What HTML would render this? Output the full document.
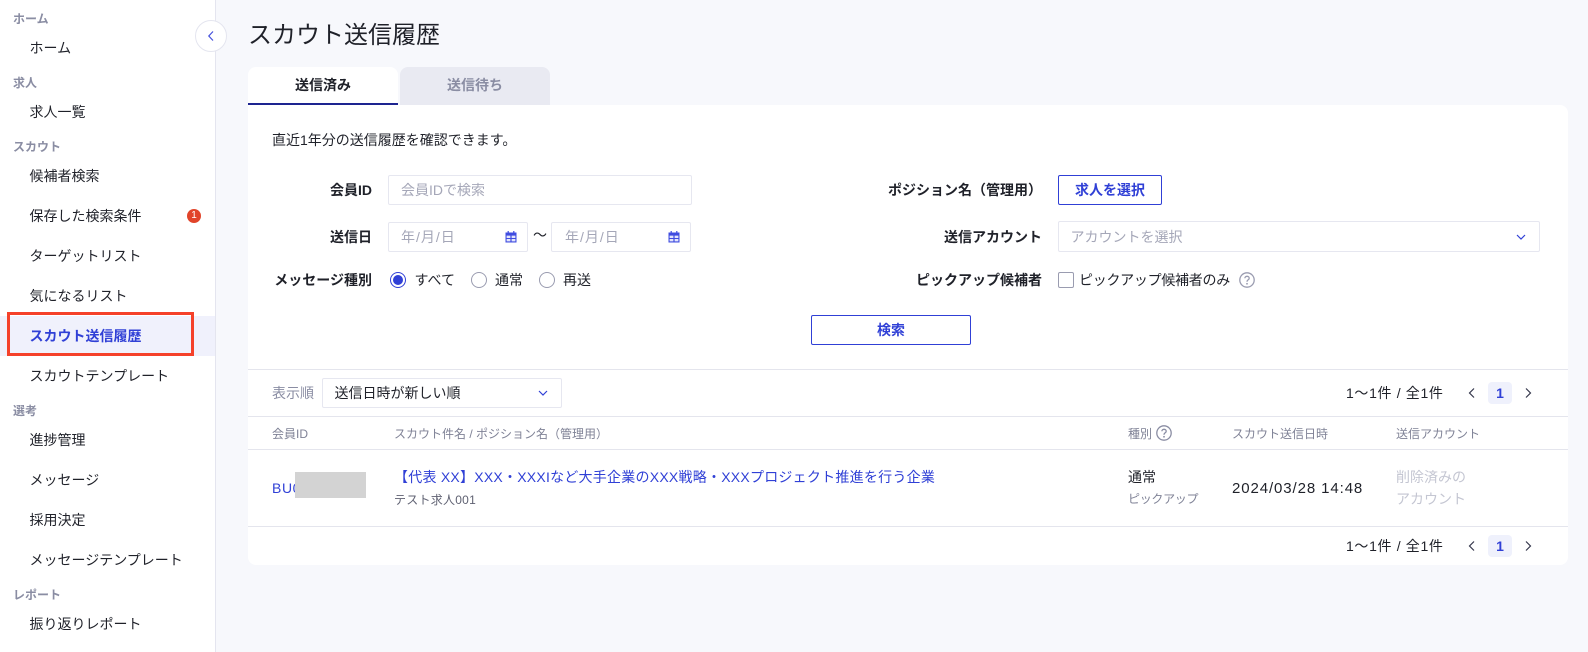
<!DOCTYPE html>
<html lang="ja">
<head>
<meta charset="utf-8">
<title>スカウト送信履歴</title>
<style>
*{box-sizing:border-box}
html,body{margin:0;padding:0}
body{width:1588px;height:652px;position:relative;overflow:hidden;background:#f7f8fc;color:#1f2129;font-family:"Liberation Sans","Noto Sans CJK JP",sans-serif;font-size:14px}
.t{position:absolute;white-space:nowrap;line-height:20px;height:20px}
.a{position:absolute}
.cat{left:13px;font-size:12px;font-weight:700;color:#8a8da3}
.it{left:29.5px;font-size:14px}
.box{position:absolute;background:#fff;border:1px solid #e6e7f0;border-radius:2px}
.ph{color:#a5a7b8}
.btn{position:absolute;background:#fff;border:1px solid #3040d6;border-radius:2px;color:#3040d6;font-weight:700;text-align:center;line-height:28px}
.line{position:absolute;left:248px;width:1320px;height:1px;background:#e4e5ed}
.g{color:#8a8da3}
.th{font-size:12px;color:#7f8296}
.blue{color:#3040d6}
.dis{color:#c4c6d2}
.radio{position:absolute;width:16px;height:16px;border-radius:50%;border:1px solid #9a9cb0;background:#fff}
.pg{letter-spacing:.65px}
svg{position:absolute;display:block}
</style>
</head>
<body>

<!-- Sidebar -->
<div class="a" style="left:0;top:0;width:216px;height:652px;background:#fff;border-right:1px solid #e4e5ef"></div>
<div class="a" style="left:0;top:316px;width:215px;height:40px;background:#f0f1fc"></div>

<div class="t cat" style="top:9px">ホーム</div>
<div class="t it" style="top:38px">ホーム</div>
<div class="t cat" style="top:73px">求人</div>
<div class="t it" style="top:102px">求人一覧</div>
<div class="t cat" style="top:137px">スカウト</div>
<div class="t it" style="top:166px">候補者検索</div>
<div class="t it" style="top:206px">保存した検索条件</div>
<div class="a" style="left:187px;top:209px;width:14px;height:14px;border-radius:50%;background:#e1442a;color:#fff;font-size:10px;line-height:14px;text-align:center">1</div>
<div class="t it" style="top:246px">ターゲットリスト</div>
<div class="t it" style="top:286px">気になるリスト</div>
<div class="t it blue" style="top:326px;font-weight:700">スカウト送信履歴</div>
<div class="a" style="left:7px;top:312px;width:187px;height:44px;border:3px solid #f5412a"></div>
<div class="t it" style="top:366px">スカウトテンプレート</div>
<div class="t cat" style="top:401px">選考</div>
<div class="t it" style="top:430px">進捗管理</div>
<div class="t it" style="top:470px">メッセージ</div>
<div class="t it" style="top:510px">採用決定</div>
<div class="t it" style="top:550px">メッセージテンプレート</div>
<div class="t cat" style="top:585px">レポート</div>
<div class="t it" style="top:614px">振り返りレポート</div>

<div class="a" style="left:195px;top:20px;width:32px;height:32px;border-radius:50%;background:#fff;border:1px solid #e4e5ef"></div>
<svg style="left:205px;top:29px" width="12" height="14" viewBox="0 0 12 14"><path d="M8 2.5 L3.8 7 L8 11.5" fill="none" stroke="#4450dc" stroke-width="1.2"/></svg>

<!-- Title and tabs -->
<div class="t" style="left:248px;top:16px;height:40px;line-height:40px;font-size:24px">スカウト送信履歴</div>
<div class="a" style="left:248px;top:67px;width:150px;height:38px;background:#fff;border-radius:8px 8px 0 0;border-bottom:2px solid #1d2490;text-align:center;font-weight:700;line-height:36px">送信済み</div>
<div class="a" style="left:400px;top:67px;width:150px;height:38px;background:#e9eaf2;border-radius:8px 8px 0 0;text-align:center;font-weight:700;line-height:36px;color:#8a8da3">送信待ち</div>

<!-- Card -->
<div class="a" style="left:248px;top:105px;width:1320px;height:460px;background:#fff;border-radius:0 8px 8px 8px"></div>

<div class="t" style="left:272px;top:130px;font-size:14px">直近1年分の送信履歴を確認できます。</div>

<!-- Form left -->
<div class="t" style="left:172px;width:200px;top:180px;text-align:right;font-weight:700">会員ID</div>
<div class="box" style="left:388px;top:175px;width:304px;height:30px"></div>
<div class="t ph" style="left:401px;top:180px;font-size:14px">会員IDで検索</div>

<div class="t" style="left:172px;width:200px;top:227px;text-align:right;font-weight:700">送信日</div>
<div class="box" style="left:388px;top:222px;width:140px;height:30px"></div>
<div class="t ph" style="left:401px;top:227px;letter-spacing:1px">年/月/日</div>
<svg style="left:505px;top:231px" width="12" height="12" viewBox="0 0 12 12"><path d="M0.5 1.5 H11.5 V11.5 H0.5 Z" fill="#3f4ce0"/><path d="M3.2 0 V2 M8.8 0 V2" stroke="#3f4ce0" stroke-width="1.2"/><path d="M1.6 4.6 H5.4 V7 H1.6 Z M6.6 4.6 H10.4 V7 H6.6 Z M1.6 8 H5.4 V10.4 H1.6 Z M6.6 8 H10.4 V10.4 H6.6 Z" fill="#e3e5fb"/></svg>
<div class="t" style="left:533px;top:225px">～</div>
<div class="box" style="left:551px;top:222px;width:140px;height:30px"></div>
<div class="t ph" style="left:565px;top:227px;letter-spacing:1px">年/月/日</div>
<svg style="left:668px;top:231px" width="12" height="12" viewBox="0 0 12 12"><path d="M0.5 1.5 H11.5 V11.5 H0.5 Z" fill="#3f4ce0"/><path d="M3.2 0 V2 M8.8 0 V2" stroke="#3f4ce0" stroke-width="1.2"/><path d="M1.6 4.6 H5.4 V7 H1.6 Z M6.6 4.6 H10.4 V7 H6.6 Z M1.6 8 H5.4 V10.4 H1.6 Z M6.6 8 H10.4 V10.4 H6.6 Z" fill="#e3e5fb"/></svg>

<div class="t" style="left:172px;width:200px;top:270px;text-align:right;font-weight:700">メッセージ種別</div>
<div class="radio" style="left:390px;top:272px;border-color:#3040d6"></div>
<div class="a" style="left:393px;top:275px;width:10px;height:10px;border-radius:50%;background:#3040d6"></div>
<div class="t" style="left:414.5px;top:270px">すべて</div>
<div class="radio" style="left:471px;top:272px"></div>
<div class="t" style="left:495px;top:270px">通常</div>
<div class="radio" style="left:539px;top:272px"></div>
<div class="t" style="left:563px;top:270px">再送</div>

<!-- Form right -->
<div class="t" style="left:834px;width:208px;top:180px;text-align:right;font-weight:700">ポジション名（管理用）</div>
<div class="btn" style="left:1058px;top:175px;width:104px;height:30px">求人を選択</div>

<div class="t" style="left:842px;width:200px;top:227px;text-align:right;font-weight:700">送信アカウント</div>
<div class="box" style="left:1058px;top:221px;width:482px;height:31px"></div>
<div class="t ph" style="left:1070.5px;top:227px">アカウントを選択</div>
<svg style="left:1515px;top:232px" width="12" height="10" viewBox="0 0 12 10"><path d="M2 3 L6 7 L10 3" fill="none" stroke="#3040d6" stroke-width="1.2"/></svg>

<div class="t" style="left:842px;width:200px;top:270px;text-align:right;font-weight:700">ピックアップ候補者</div>
<div class="a" style="left:1058px;top:272px;width:16px;height:16px;border:1px solid #9a9cb0;border-radius:2px;background:#fff"></div>
<div class="t" style="left:1079px;top:270px;letter-spacing:-.28px">ピックアップ候補者のみ</div>
<svg style="left:1239px;top:272px" width="16" height="16" viewBox="0 0 16 16"><circle cx="8" cy="8" r="7.2" fill="none" stroke="#9a9cb0" stroke-width="1.3"/><path d="M5.9 6.2 C5.9 3.7 10.2 3.7 10.2 6.2 C10.2 7.8 8 7.8 8 9.7" fill="none" stroke="#9a9cb0" stroke-width="1.3"/><circle cx="8" cy="11.8" r=".9" fill="#9a9cb0"/></svg>

<div class="btn" style="left:811px;top:315px;width:160px;height:30px">検索</div>

<!-- Toolbar -->
<div class="line" style="top:369px"></div>
<div class="t g" style="left:272px;top:383px">表示順</div>
<div class="box" style="left:322px;top:378px;width:240px;height:30px"></div>
<div class="t" style="left:334.5px;top:383px">送信日時が新しい順</div>
<svg style="left:537px;top:388px" width="12" height="10" viewBox="0 0 12 10"><path d="M2 3 L6 7 L10 3" fill="none" stroke="#3040d6" stroke-width="1.2"/></svg>

<div class="t pg" style="left:1346px;top:383px">1～1件 / 全1件</div>
<svg style="left:1466px;top:387px" width="12" height="12" viewBox="0 0 12 12"><path d="M8 1.5 L3.5 6 L8 10.5" fill="none" stroke="#33354a" stroke-width="1.2"/></svg>
<div class="a blue" style="left:1488px;top:382px;width:24px;height:22px;background:#eff1fc;border-radius:4px;text-align:center;font-weight:700;line-height:22px">1</div>
<svg style="left:1522px;top:387px" width="12" height="12" viewBox="0 0 12 12"><path d="M4 1.5 L8.5 6 L4 10.5" fill="none" stroke="#33354a" stroke-width="1.2"/></svg>

<div class="line" style="top:416px"></div>

<!-- Table head -->
<div class="t th" style="left:272px;top:424px">会員ID</div>
<div class="t th" style="left:394px;top:424px">スカウト件名 / ポジション名（管理用）</div>
<div class="t th" style="left:1128px;top:424px">種別</div>
<svg style="left:1156px;top:425px" width="16" height="16" viewBox="0 0 16 16"><circle cx="8" cy="8" r="7.2" fill="none" stroke="#8a8da3" stroke-width="1.3"/><path d="M5.9 6.2 C5.9 3.7 10.2 3.7 10.2 6.2 C10.2 7.8 8 7.8 8 9.7" fill="none" stroke="#8a8da3" stroke-width="1.3"/><circle cx="8" cy="11.8" r=".9" fill="#8a8da3"/></svg>
<div class="t th" style="left:1232px;top:424px">スカウト送信日時</div>
<div class="t th" style="left:1396px;top:424px">送信アカウント</div>
<div class="line" style="top:449px"></div>

<!-- Row -->
<div class="t blue" style="left:272px;top:478px;letter-spacing:.6px">BU0</div>
<div class="a" style="left:295px;top:472px;width:71px;height:26px;background:#d3d3d3"></div>
<div class="t blue" style="left:394px;top:467px;font-size:14px;letter-spacing:.24px">【代表 XX】XXX・XXXIなど大手企業のXXX戦略・XXXプロジェクト推進を行う企業</div>
<div class="t" style="left:394px;top:490px;font-size:12px;color:#5f6172;letter-spacing:.25px">テスト求人001</div>
<div class="t" style="left:1128px;top:467px">通常</div>
<div class="t th" style="left:1128px;top:489px;letter-spacing:-.3px">ピックアップ</div>
<div class="t" style="left:1232px;top:479px;font-size:15px;letter-spacing:.9px">2024/03/28 14:48</div>
<div class="t dis" style="left:1396px;top:467px">削除済みの</div>
<div class="t dis" style="left:1396px;top:489px">アカウント</div>
<div class="line" style="top:526px"></div>

<!-- Bottom pagination -->
<div class="t pg" style="left:1346px;top:536px">1～1件 / 全1件</div>
<svg style="left:1466px;top:540px" width="12" height="12" viewBox="0 0 12 12"><path d="M8 1.5 L3.5 6 L8 10.5" fill="none" stroke="#33354a" stroke-width="1.2"/></svg>
<div class="a blue" style="left:1488px;top:535px;width:24px;height:22px;background:#eff1fc;border-radius:4px;text-align:center;font-weight:700;line-height:22px">1</div>
<svg style="left:1522px;top:540px" width="12" height="12" viewBox="0 0 12 12"><path d="M4 1.5 L8.5 6 L4 10.5" fill="none" stroke="#33354a" stroke-width="1.2"/></svg>

</body>
</html>
